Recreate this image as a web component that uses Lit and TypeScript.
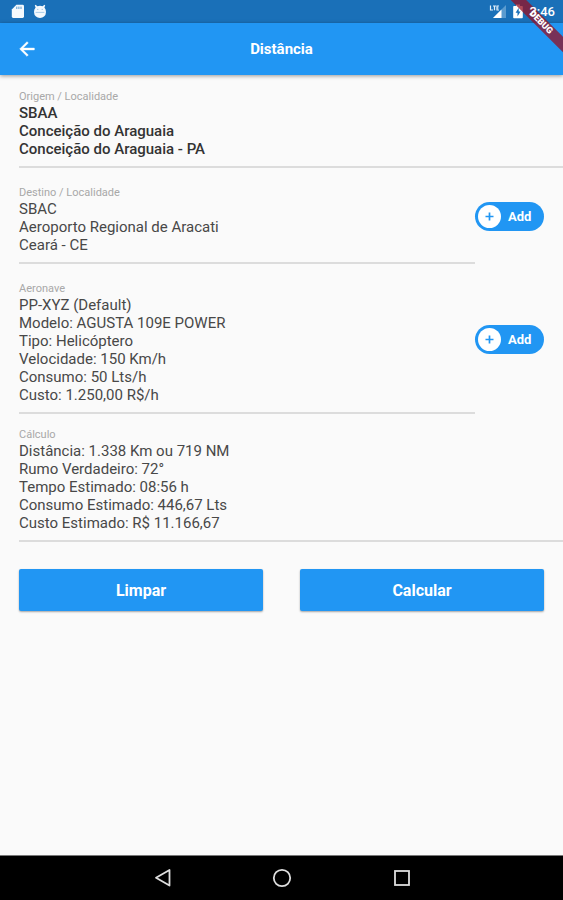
import { LitElement, html, css, svg, nothing } from "lit";
import { customElement, property } from "lit/decorators.js";

interface Section {
  label: string;
  lines: string[];
  strong?: boolean;
  add?: boolean;
  compact?: boolean;
}

const SECTIONS: Section[] = [
  {
    label: "Origem / Localidade",
    lines: ["SBAA", "Conceição do Araguaia", "Conceição do Araguaia - PA"],
    strong: true,
    compact: true,
  },
  {
    label: "Destino / Localidade",
    lines: ["SBAC", "Aeroporto Regional de Aracati", "Ceará - CE"],
    add: true,
  },
  {
    label: "Aeronave",
    lines: [
      "PP-XYZ (Default)",
      "Modelo: AGUSTA 109E POWER",
      "Tipo: Helicóptero",
      "Velocidade: 150 Km/h",
      "Consumo: 50 Lts/h",
      "Custo: 1.250,00 R$/h",
    ],
    add: true,
  },
  {
    label: "Cálculo",
    lines: [
      "Distância: 1.338 Km ou 719 NM",
      "Rumo Verdadeiro: 72°",
      "Tempo Estimado: 08:56 h",
      "Consumo Estimado: 446,67 Lts",
      "Custo Estimado: R$ 11.166,67",
    ],
    compact: true,
  },
];

@customElement("status-bar")
class StatusBar extends LitElement {
  static styles = css`
    :host {
      display: flex;
      align-items: center;
      justify-content: space-between;
      height: 23px;
      padding: 0 8px 0 11px;
      background: #1a70b8;
      color: #fff;
    }
    .group {
      display: flex;
      align-items: center;
      gap: 8px;
    }
    svg {
      display: block;
    }
    .time {
      position: relative;
      z-index: 2;
      font-size: 13px;
      line-height: 23px;
      font-weight: 500;
    }
    .system {
      gap: 6px;
    }
  `;

  render() {
    return html`
      <div class="group">
        <svg width="14" height="15" viewBox="0 0 14 15">
          <path d="M5.4 .8H11.6Q13 .8 13 2.2V12.6Q13 14 11.6 14H2.2Q.8 14 .8 12.6V5.4Z" fill="#f4f9fd" />
          <path d="M5.8 2.6V5M7.9 2.6V5M10 2.6V5" stroke="#5b9bcf" stroke-width="1" />
        </svg>
        <svg width="14" height="15" viewBox="0 0 14 15">
          <path d="M2.6 .8L4.4 2.2Q7 1.4 9.6 2.2L11.4 .8L12.2 1.6L11.4 3.4Q13 5 13 8Q13 11 11 12.6Q9.6 14 7 14Q4.4 14 3 12.6Q1 11 1 8Q1 5 2.6 3.4L1.8 1.6Z" fill="#f4f9fd" />
          <path d="M4 5.4H5.4M8.6 5.4H10M2.6 8.4H11.4" stroke="#a9cde9" stroke-width="1" />
        </svg>
      </div>
      <div class="group system">
        <svg width="18" height="15" viewBox="0 0 18 15">
          <path d="M17 1V14H4Z" fill="#5b9bcf" />
          <path d="M12.5 5.5V14H4Z" fill="#fff" />
          <path d="M1.5 1.5V6H4M4 2H7M5.500 2V6.3M10 2H8V6H10M8 4H9.6" fill="none" stroke="#e3eff9" stroke-width="1.2" />
        </svg>
        <svg width="10" height="15" viewBox="0 0 10 15">
          <path d="M3 .5H7V2H9Q9.8 2 9.8 2.8V13.5Q9.8 14.3 9 14.3H1Q.2 14.3 .2 13.5V2.8Q.2 2 1 2H3Z" fill="#fff" />
          <path d="M5.7 3.8L2.6 8.8H4.5V12.4L7.5 7.4H5.7Z" fill="#1a70b8" />
        </svg>
        <span class="time">3:46</span>
      </div>
    `;
  }
}

@customElement("add-button")
class AddButton extends LitElement {
  static styles = css`
    button {
      display: flex;
      align-items: center;
      gap: 7px;
      width: 69px;
      height: 29px;
      padding: 0 3px;
      border: 0;
      border-radius: 15px;
      background: #2196f3;
      color: #fff;
      font: 700 13px/16px Roboto, sans-serif;
      cursor: pointer;
    }
    .disc {
      display: block;
      flex: none;
    }
    .text {
      padding-top: 2px;
    }
  `;

  render() {
    return html`
      <button type="button">
        <svg class="disc" width="23" height="23" viewBox="0 0 23 23">
          <circle cx="11.5" cy="11.5" r="11.5" fill="#fff" />
          <path d="M11.5 7.5V15.5M7.5 11.5H15.5" stroke="#2196f3" stroke-width="1.7" />
        </svg>
        <span class="text">Add</span>
      </button>
    `;
  }
}

@customElement("info-section")
class InfoSection extends LitElement {
  @property({ attribute: false }) section!: Section;

  static styles = css`
    .row {
      display: flex;
      align-items: center;
    }
    .row.add {
      padding-right: 19px;
    }
    .body {
      flex: 1;
      min-width: 0;
      padding: 18px 0 8px;
      border-bottom: 2px solid #dcdcdc;
    }
    .compact .body {
      padding-top: 14px;
    }
    h2 {
      margin: 0;
      font-size: 11px;
      line-height: 14px;
      font-weight: 400;
      color: #a8a8a8;
    }
    p {
      margin: 0;
      font-size: 15px;
      line-height: 18px;
      color: #484848;
    }
    .strong p {
      font-weight: 500;
      color: #333;
    }
  `;

  render() {
    const s = this.section;
    const cls = ["row", s.add && "add", s.compact && "compact", s.strong && "strong"]
      .filter(Boolean)
      .join(" ");
    return html`
      <section class=${cls}>
        <div class="body">
          <h2>${s.label}</h2>
          ${s.lines.map((line) => html`<p>${line}</p>`)}
        </div>
        ${s.add ? html`<add-button></add-button>` : nothing}
      </section>
    `;
  }
}

@customElement("app-root")
class AppRoot extends LitElement {
  static styles = css`
    :host {
      display: flex;
      flex-direction: column;
      position: relative;
      min-height: 100vh;
      overflow: hidden;
      background: #fafafa;
      font-family: Roboto, sans-serif;
    }
    header {
      display: grid;
      grid-template-columns: 53px 1fr 53px;
      align-items: center;
      height: 52px;
      background: #2196f3;
      color: #fff;
      box-shadow: 0 1px 4px rgba(0, 0, 0, 0.4);
    }
    h1 {
      margin: 0;
      font-size: 15px;
      line-height: 20px;
      font-weight: 700;
      text-align: center;
    }
    button {
      border: 0;
      padding: 0;
      cursor: pointer;
    }
    .icon {
      display: flex;
      justify-content: center;
      align-items: center;
      height: 100%;
      background: none;
    }
    main {
      flex: 1;
      padding: 1px 0 0 19px;
    }
    .actions {
      display: grid;
      grid-template-columns: 1fr 1fr;
      gap: 37px;
      padding: 27px 19px 27px 0;
    }
    .action {
      height: 42px;
      padding-top: 2px;
      border-radius: 2px;
      background: #2196f3;
      color: #fff;
      font: 700 16px/20px Roboto, sans-serif;
      box-shadow: 0 1px 2px rgba(0, 0, 0, 0.35);
    }
    nav {
      display: flex;
      justify-content: center;
      gap: 80px;
      height: 45px;
      background: #000;
      border-top: 1px solid #777;
      box-sizing: border-box;
    }
    nav .icon {
      width: 40px;
    }
    .ribbon {
      position: absolute;
      z-index: 1;
      top: 17px;
      right: -38px;
      width: 120px;
      height: 11px;
      transform: rotate(45deg);
      background: rgba(150, 15, 35, 0.75);
      color: #fff;
      font-size: 9px;
      line-height: 11px;
      font-weight: 900;
      text-align: center;
      pointer-events: none;
    }
  `;

  private navIcon(label: string, shape: unknown) {
    return html`
      <button class="icon" type="button" aria-label=${label}>
        <svg width="20" height="20" viewBox="0 0 20 20" fill="none" stroke="#dedede" stroke-width="1.8">
          ${shape}
        </svg>
      </button>
    `;
  }

  render() {
    return html`
      <status-bar></status-bar>
      <header>
        <button class="icon" type="button" aria-label="Voltar">
          <svg width="22" height="22" viewBox="0 0 24 24" fill="#fff" stroke="#fff" stroke-width=".5">
            <path d="M20 11H7.830l5.590-5.590L12 4l-8 8 8 8 1.410-1.410L7.830 13H20v-2z" />
          </svg>
        </button>
        <h1>Distância</h1>
      </header>
      <main>
        ${SECTIONS.map((s) => html`<info-section .section=${s}></info-section>`)}
        <div class="actions">
          <button class="action" type="button">Limpar</button>
          <button class="action" type="button">Calcular</button>
        </div>
      </main>
      <nav>
        ${this.navIcon("Voltar", svg`<path d="M17.5 2V17.500L4 9.800Z" stroke-linejoin="round" />`)}
        ${this.navIcon("Início", svg`<circle cx="10" cy="10" r="8.2" />`)}
        ${this.navIcon("Recentes", svg`<rect x="3" y="3" width="14" height="14" />`)}
      </nav>
      <div class="ribbon">DEBUG</div>
    `;
  }
}
